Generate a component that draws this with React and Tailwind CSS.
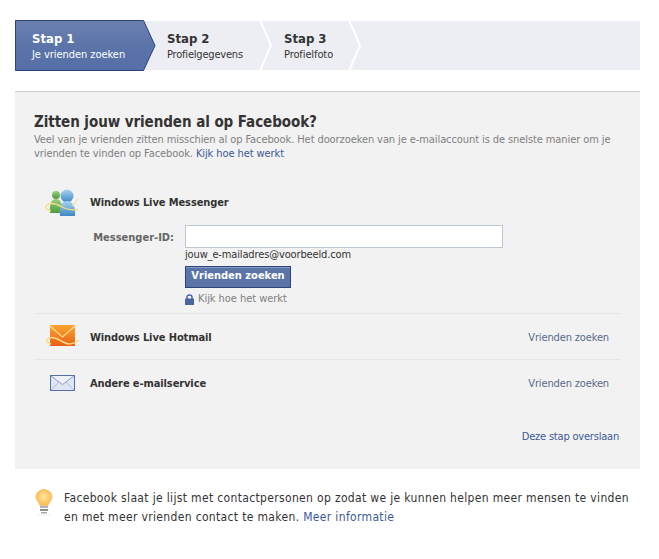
const font = { fontFamily: '"DejaVu Sans Condensed", "DejaVu Sans", sans-serif' };

function StepArrow({ x }) {
  return (
    <svg className="absolute top-0" style={{ left: x }} width="16" height="49" viewBox="0 0 16 49">
      <path d="M1 -1 L12 24.5 L1 50" fill="#edeef4" stroke="#ffffff" strokeWidth="2" />
    </svg>
  );
}

function Step({ title, sub, className, subClass }) {
  return (
    <div className={`flex flex-col justify-center ${className}`}>
      <div className="text-[13px] leading-[17px] font-bold text-[#333333]">{title}</div>
      <div className={`text-[11px] leading-[15px] text-[#333333] ${subClass}`}>{sub}</div>
    </div>
  );
}

function MessengerIcon() {
  return (
    <svg width="34" height="30" viewBox="0 0 34 30">
      <defs>
        <linearGradient id="mg" x1="0" y1="0" x2="0" y2="1">
          <stop offset="0" stopColor="#9ad07a" />
          <stop offset="1" stopColor="#4f9a3c" />
        </linearGradient>
        <linearGradient id="mb" x1="0" y1="0" x2="0" y2="1">
          <stop offset="0" stopColor="#a5d4f0" />
          <stop offset="1" stopColor="#3f86c4" />
        </linearGradient>
      </defs>
      <circle cx="12" cy="7" r="4" fill="url(#mg)" />
      <path d="M6 25 C5 15 8 11 12 11 C16 11 19 15 18 25 Z" fill="url(#mg)" />
      <circle cx="23" cy="8" r="6.5" fill="url(#mb)" />
      <path d="M16 28 C15 18 18 13 23 13 C28 13 32 18 31 28 Z" fill="url(#mb)" />
      <path d="M7 23 C2 22 1 19 3 17 C7 14 13 16 18 19 C23 22 28 22 34 22" fill="none" stroke="#f6dc88" strokeWidth="1.4" />
      <path d="M28 18 L34 11" stroke="#f4e3a8" strokeWidth="1.2" />
    </svg>
  );
}

function HotmailIcon() {
  return (
    <svg width="34" height="26" viewBox="0 0 34 26">
      <defs>
        <linearGradient id="ho" x1="0" y1="0" x2="0" y2="1">
          <stop offset="0" stopColor="#fba530" />
          <stop offset="1" stopColor="#ea5f15" />
        </linearGradient>
      </defs>
      <rect x="4" y="1" width="25" height="21" fill="url(#ho)" />
      <path d="M4 2 L16.5 13 L29 2" fill="none" stroke="#ffd98a" strokeWidth="1.3" />
      <path d="M5 20 C0 19 0 15 3 14 C8 12 13 16 17 18 C22 21 28 20 33 16" fill="none" stroke="#f8dc88" strokeWidth="1.5" />
    </svg>
  );
}

function MailIcon() {
  return (
    <svg width="25" height="16" viewBox="0 0 25 16">
      <rect x="0.5" y="0.5" width="24" height="15" fill="#dfe5f3" stroke="#5570a8" />
      <path d="M1 1 L12.5 9.5 L24 1" fill="#eef1f8" stroke="#8a9cc8" />
      <path d="M1 15 L9 7 M24 15 L16 7" stroke="#b5c1dd" />
    </svg>
  );
}

function BulbIcon() {
  return (
    <svg width="18" height="27" viewBox="0 0 18 27">
      <defs>
        <radialGradient id="bu" cx="0.5" cy="0.45" r="0.55">
          <stop offset="0" stopColor="#ffe59a" />
          <stop offset="1" stopColor="#fbbb4e" />
        </radialGradient>
      </defs>
      <path d="M9 0.5 C13.8 0.5 17 4 17 8 C17 11.5 14 13 13 16.5 L5 16.5 C4 13 1 11.5 1 8 C1 4 4.2 0.5 9 0.5 Z" fill="url(#bu)" stroke="#f0c47c" />
      <rect x="5" y="17" width="8" height="2" fill="#b4b4b4" />
      <rect x="5" y="20" width="8" height="2" fill="#8d8d8d" />
      <rect x="6" y="23" width="6" height="1.5" fill="#a8a8a8" />
      <rect x="2" y="25.5" width="14" height="1" fill="#eeeeee" />
    </svg>
  );
}

function LockIcon() {
  return (
    <svg width="9" height="11" viewBox="0 0 9 11">
      <path d="M2 5 V3.2 C2 1.7 3 1 4.5 1 C6 1 7 1.7 7 3.2 V5" fill="none" stroke="#4a64a0" strokeWidth="1.5" />
      <rect x="0" y="4.5" width="9" height="6.5" rx="0.5" fill="#4a64a0" />
    </svg>
  );
}

function ServiceRow({ icon, title, link }) {
  return (
    <div className="flex items-center h-[46px] border-t border-[#e6e6e6]">
      <div className="w-[56px] flex justify-center shrink-0 pl-[1px]">{icon}</div>
      <div className="mt-[4px] text-[11px] tracking-[-0.1px] font-bold text-[#333333]">{title}</div>
      <div className="mt-[4px] ml-auto pr-[11px] text-[11px] tracking-[-0.14px] text-[#5a6a8a]">{link}</div>
    </div>
  );
}

export default function App() {
  return (
    <div className="w-[659px] h-[559px] bg-white pt-[21px] px-[15px]" style={font}>
      <div className="relative flex h-[49px] w-[625px] bg-[#edeef4]">
        <div className="absolute left-0 top-[-1px]">
          <svg width="141" height="51" viewBox="0 0 141 51">
            <defs>
              <linearGradient id="act" x1="0" y1="0" x2="0" y2="1">
                <stop offset="0" stopColor="#6c80af" />
                <stop offset="0.5" stopColor="#5b74a9" />
                <stop offset="1" stopColor="#5570a7" />
              </linearGradient>
            </defs>
            <path d="M0.5 0.5 H128.5 L140 25.5 L128.5 50.5 H0.5 Z" fill="url(#act)" stroke="#29437f" />
          </svg>
        </div>
        <StepArrow x={244} />
        <StepArrow x={333} />
        <Step title="Stap 1" sub="Je vrienden zoeken" subClass="tracking-[-0.05px]" className="relative w-[152px] pl-[17px] [&>div]:text-white" />
        <Step title="Stap 2" sub="Profielgegevens" subClass="tracking-[-0.2px]" className="relative w-[117px]" />
        <Step title="Stap 3" sub="Profielfoto" subClass="tracking-[-0.1px]" className="relative" />
      </div>

      <div className="mt-[21px] w-[625px] h-[378px] bg-[#f2f2f2] border-t border-[#cccccc] pt-[20px] pl-[19px] pr-[20px]">
        <h1 className="text-[15px] leading-[20px] tracking-[-0.06px] font-bold text-[#333333]">Zitten jouw vrienden al op Facebook?</h1>
        <p className="text-[11px] leading-[14px] mt-[1px] tracking-[-0.09px] text-[#808080]">
          Veel van je vrienden zitten misschien al op Facebook. Het doorzoeken van je e-mailaccount is de snelste manier om je vrienden te vinden op Facebook. <span className="text-[#3b5998]">Kijk hoe het werkt</span>
        </p>

        <div className="flex items-center h-[36px] mt-[24px]">
          <div className="w-[56px] shrink-0 pl-[10px]"><MessengerIcon /></div>
          <div className="text-[11px] tracking-[-0.1px] font-bold text-[#333333]">Windows Live Messenger</div>
        </div>

        <div className="flex mt-[4px]">
          <label className="w-[140px] text-right text-[11px] font-bold text-[#666666] pt-[5px] shrink-0">Messenger-ID:</label>
          <div className="ml-[11px]">
            <div className="w-[318px] h-[23px] bg-white border border-[#bdc7d8]" />
            <div className="text-[11px] leading-[14px] tracking-[-0.14px] text-[#333333]">jouw_e-mailadres@voorbeeld.com</div>
            <button className="block mt-[4px] w-[106px] h-[22px] pb-[1px] bg-[#5b74a8] border border-[#29447e] text-white text-[11px] font-bold [box-shadow:inset_0_1px_0_#8a9cc2]">Vrienden zoeken</button>
            <div className="flex items-center gap-[4px] mt-[4px] h-[14px] text-[11px] tracking-[-0.05px] text-[#808080]"><LockIcon />Kijk hoe het werkt</div>
          </div>
        </div>

        <div className="mt-[7px]">
          <ServiceRow icon={<HotmailIcon />} title="Windows Live Hotmail" link="Vrienden zoeken" />
          <ServiceRow icon={<MailIcon />} title="Andere e-mailservice" link="Vrienden zoeken" />
        </div>

        <div className="text-right mt-[24px] pr-[1px] text-[11px] tracking-[-0.2px] text-[#3b5998]">Deze stap overslaan</div>
      </div>

      <div className="flex mt-[20px] pl-[20px]">
        <div className="w-[29px] shrink-0"><BulbIcon /></div>
        <p className="text-[12px] leading-[19px] tracking-[0.34px] text-[#333333] w-[575px]">
          Facebook slaat je lijst met contactpersonen op zodat we je kunnen helpen meer mensen te vinden en met meer vrienden contact te maken. <span className="text-[#3b5998]">Meer informatie</span>
        </p>
      </div>
    </div>
  );
}
